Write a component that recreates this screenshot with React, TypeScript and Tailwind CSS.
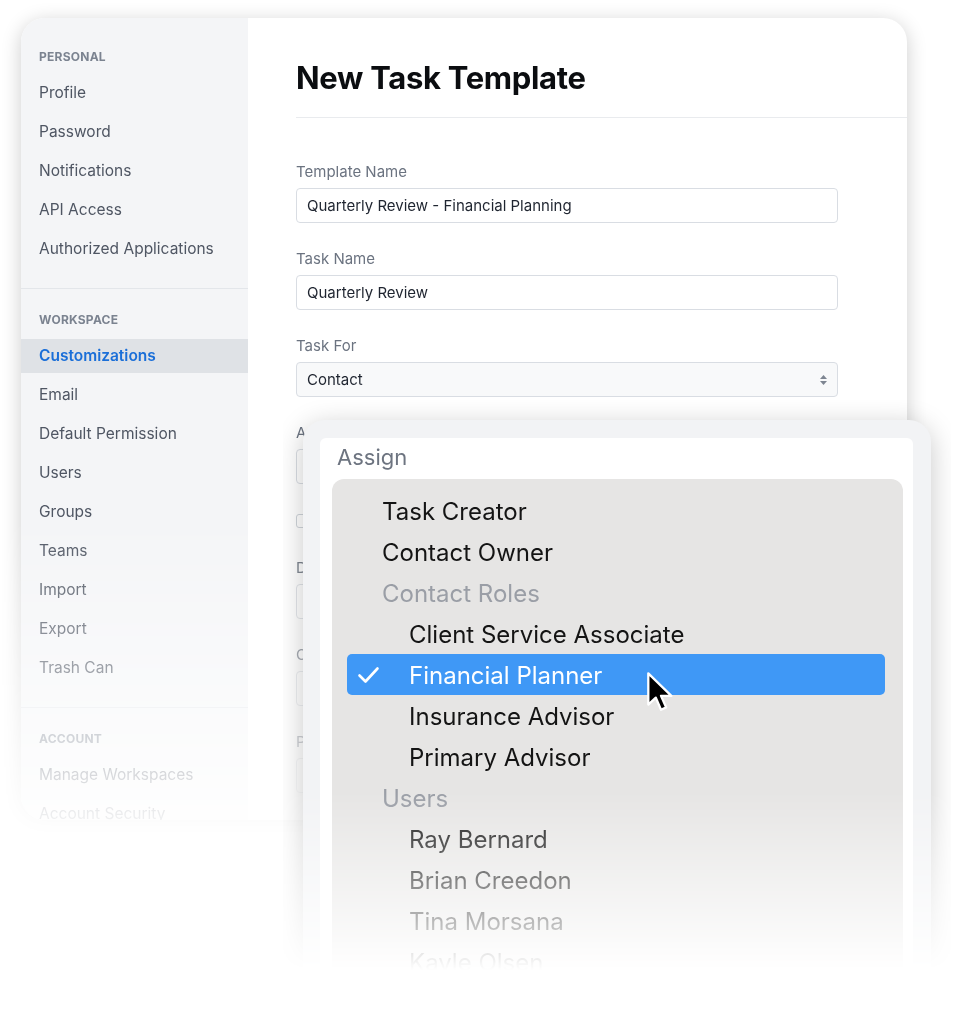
import React from 'react';

const personal = ['Profile', 'Password', 'Notifications', 'API Access', 'Authorized Applications'];
const workspace = ['Customizations', 'Email', 'Default Permission', 'Users', 'Groups', 'Teams', 'Import', 'Export', 'Trash Can'];
const account = ['Manage Workspaces', 'Account Security'];

const options = [
  { label: 'Task Creator', kind: 'item', indent: false },
  { label: 'Contact Owner', kind: 'item', indent: false },
  { label: 'Contact Roles', kind: 'group', indent: false },
  { label: 'Client Service Associate', kind: 'item', indent: true },
  { label: 'Financial Planner', kind: 'item', indent: true, selected: true },
  { label: 'Insurance Advisor', kind: 'item', indent: true },
  { label: 'Primary Advisor', kind: 'item', indent: true },
  { label: 'Users', kind: 'group', indent: false },
  { label: 'Ray Bernard', kind: 'item', indent: true },
  { label: 'Brian Creedon', kind: 'item', indent: true },
  { label: 'Tina Morsana', kind: 'item', indent: true },
  { label: 'Kayle Olsen', kind: 'item', indent: true },
];

const SidebarSection = ({ title, items, first = false, last = false }: { title: string; items: string[]; first?: boolean; last?: boolean }) => (
  <div className={`${first ? 'pt-[31px]' : 'pt-[23px]'} ${last ? '' : 'pb-[20px] border-b border-[#e3e6ea]'}`}>
    <div className="px-[18px] h-[16px] leading-[16px] text-[12px] font-bold tracking-[0.02em] text-[#7b8390] mb-[8px]">{title}</div>
    {items.map((item) =>
      item === 'Customizations' ? (
        <div key={item} className="h-[39px] flex items-center">
          <div className="w-full h-[34px] flex items-center px-[18px] bg-[#dfe2e6] text-[15.5px] font-semibold text-[#1b6fd8]">
            {item}
          </div>
        </div>
      ) : (
        <div key={item} className="h-[39px] flex items-center px-[18px] text-[15.5px] text-[#4f5663]">
          {item}
        </div>
      )
    )}
  </div>
);

const Field = ({ label, value, select = false }: { label: string; value?: string; select?: boolean }) => (
  <div className="mb-[27px]">
    <div className="h-[18px] leading-[18px] text-[15px] text-[#6b7380] mb-[7px]">{label}</div>
    <div
      className={`h-[35px] w-[542px] flex items-center justify-between rounded-[4px] border border-[#d9dde3] px-[10px] pt-[2px] text-[15px] text-[#1f2530] ${
        select ? 'bg-[#f8f9fa]' : 'bg-white'
      }`}
    >
      <span>{value}</span>
      {select && (
        <svg width="9" height="12" viewBox="0 0 9 12" className="mr-[-1px] mb-[2px]">
          <path d="M4.5 1 L8 5 L1 5 Z" fill="#7d8591" />
          <path d="M4.5 11 L8 7 L1 7 Z" fill="#7d8591" />
        </svg>
      )}
    </div>
  </div>
);

const Check = () => (
  <svg width="23" height="18" viewBox="0 0 23 18">
    <path d="M2.5 9.5 L8.5 15.5 L20.5 2.5" fill="none" stroke="#fff" strokeWidth="2.6" strokeLinecap="round" strokeLinejoin="round" />
  </svg>
);

const Pointer = () => (
  <svg width="30" height="44" viewBox="0 0 26 38">
    <path
      d="M2 2 L2 29 L8.5 23 L13 33.5 L17.5 31.5 L13 21.5 L22 21.5 Z"
      fill="#000"
      stroke="#fff"
      strokeWidth="2"
      strokeLinejoin="round"
    />
  </svg>
);

export default function App() {
  return (
    <div className="relative w-[955px] h-[1024px] overflow-hidden bg-white font-['Inter',sans-serif]">
      {/* back card, faded toward the bottom */}
      <div className="w-fit pl-[21px] pt-[18px] pr-[30px] pb-[40px] [mask-image:linear-gradient(to_bottom,#000_520px,rgba(0,0,0,0.06)_830px,transparent_860px)]">
        <div className="w-[886px] h-[802px] flex rounded-[24px] bg-white overflow-hidden shadow-[0_4px_20px_rgba(0,0,0,0.2)]">
          {/* Sidebar */}
          <div className="w-[227px] shrink-0 bg-[#f4f5f7]">
            <SidebarSection title="PERSONAL" items={personal} first />
            <SidebarSection title="WORKSPACE" items={workspace} />
            <SidebarSection title="ACCOUNT" items={account} last />
          </div>

          {/* Main */}
          <div className="flex-1 pl-[48px]">
            <div className="pt-[40px] pb-[19px] border-b border-[#e9ebee]">
              <h1 className="h-[40px] leading-[40px] text-[31px] font-bold tracking-[-0.01em] text-[#0b0d10]">New Task Template</h1>
            </div>
            <div className="pt-[45px]">
              <Field label="Template Name" value="Quarterly Review - Financial Planning" />
              <Field label="Task Name" value="Quarterly Review" />
              <Field label="Task For" value="Contact" select />
              <Field label="Assign To" value="" />
              <div className="h-[20px] flex items-center mb-[28px]">
                <div className="w-[13px] h-[14px] rounded-[3px] border border-[#cfd4da] bg-white" />
              </div>
              <Field label="Due Date" value="" />
              <Field label="Category" value="" />
              <Field label="Priority" value="" />
            </div>
          </div>
        </div>
      </div>

      {/* Assign dropdown panel */}
      <div className="absolute left-[283px] top-[400px] w-[668px] h-[624px] p-[20px] [mask-image:linear-gradient(to_bottom,#000_392px,rgba(0,0,0,0.25)_530px,transparent_570px)]">
        <div className="h-[620px] rounded-[22px] bg-[#f2f3f5] pt-[18px] pl-[17px] pr-[18px] shadow-[0_6px_28px_rgba(0,0,0,0.22)]">
          <div className="h-full rounded-[6px] bg-white pt-[7px]">
            <div className="pl-[17px] h-[24px] leading-[24px] text-[22px] text-[#6d7480] mb-[10px]">Assign</div>
            <div className="relative ml-[12px] mr-[10px] h-[560px] rounded-[12px] bg-[#e6e5e4] pt-[11px] pl-[15px] pr-[18px]">
              {options.map((o) => (
                <div
                  key={o.label}
                  className={`h-[41px] flex items-center rounded-[5px] ${o.selected ? 'bg-[#3f98f6]' : ''}`}
                >
                  <div className="w-[35px] shrink-0 pl-[10px] flex items-center">{o.selected && <Check />}</div>
                  <span
                    className={`text-[24px] pt-[2px] ${o.indent ? 'pl-[27px]' : ''} ${
                      o.selected ? 'text-white' : o.kind === 'group' ? 'text-[#9a9ea6]' : 'text-[#141414]'
                    }`}
                  >
                    {o.label}
                  </span>
                </div>
              ))}
              {/* mouse pointer over the selected row */}
              <div className="absolute left-[314px] top-[192px]">
                <Pointer />
              </div>
            </div>
          </div>
        </div>
      </div>
    </div>
  );
}
